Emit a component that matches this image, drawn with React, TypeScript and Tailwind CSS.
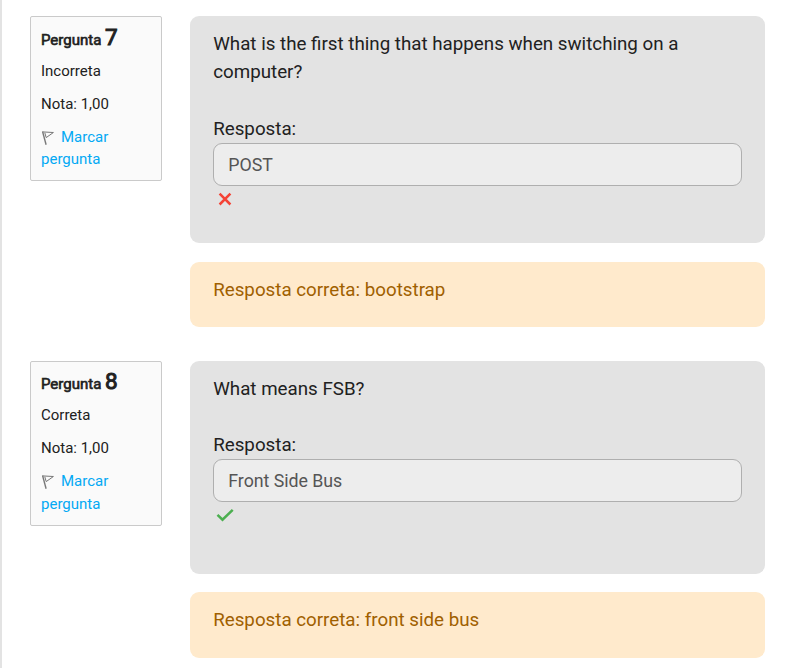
import React from "react";

function Flag() {
  return (
    <svg className="mr-[4px] inline-block" width="16" height="16" viewBox="0 0 16 16" fill="none" stroke="#777777" strokeWidth="1">
      <path d="M1.6 1.6 L5.1 14.7" strokeWidth="1.4" />
      <path d="M1.3 1.9 L12.4 2.5 L5.2 7.6 L3.8 2.8" />
    </svg>
  );
}

function Info({ n, state, ok }: { n: number; state: string; ok?: boolean }) {
  return (
    <aside className="h-[165px] w-[132px] shrink-0 rounded-[2px] border border-[#cacaca] bg-[#fafafa] px-[10px] text-[15px] leading-[22.5px] text-[#212121]">
      <h3 className={`h-[32px] text-[15px] font-normal leading-[32px] [-webkit-text-stroke:0.65px_#212121] ${ok ? "mt-[3px]" : "mt-[4px]"}`}>
        Pergunta <span className="text-[22.5px] [-webkit-text-stroke:1px_#212121]">{n}</span>
      </h3>
      <div className="mt-[7px]">{state}</div>
      <div className="mt-[10px]">Nota: 1,00</div>
      <div className={`text-[#03a9f4] ${ok ? "mt-[11px] leading-[23px]" : "mt-[10.5px]"}`}>
        <Flag />
        Marcar pergunta
      </div>
    </aside>
  );
}

function Question({ n, state, text, value, answer, ok }: { n: number; state: string; text: string; value: string; answer: string; ok?: boolean }) {
  return (
    <section className="flex items-start gap-[28px]">
      <Info n={n} state={state} ok={ok} />
      <div className="w-[575px]">
        <div className={`rounded-[9px] bg-[#e3e3e3] px-[23px] pt-[14px] text-[18.75px] leading-[28.125px] text-[#212121] ${ok ? "h-[213px]" : "h-[227px]"}`}>
          <p className={`pl-[0.2px] ${ok ? "mb-[28px]" : "mb-[28.5px]"}`}>{text}</p>
          <label className="block pl-[0.2px]">Resposta:</label>
          <div className={`flex h-[43px] items-center rounded-[9px] border border-[#afafaf] bg-[#ededed] px-[14.3px] text-[17.8px] tracking-[-0.05px] text-[#555555] ${ok ? "mt-0" : "mt-[0.2px]"}`}>{value}</div>
          <svg className="ml-[3px] mt-[4px]" width="18" height="18" viewBox="0 0 18 18" fill="none" stroke={ok ? "#4caf50" : "#f44336"} strokeWidth="2.5">
            {ok ? <path d="M1.5 8.8 L6.5 13.7 L16.7 3.8" /> : <path d="M3.6 3.7 L14.4 14.5 M14.4 3.7 L3.6 14.5" />}
          </svg>
        </div>
        <div className={`rounded-[9px] bg-[#ffeacc] pl-[23.2px] pr-[23px] pt-[14px] text-[18.75px] leading-[28.125px] text-[#a06000] ${ok ? "mt-[18px] h-[66px]" : "mt-[19px] h-[65px]"}`}>
          Resposta correta: {answer}
        </div>
      </div>
    </section>
  );
}

export default function App() {
  return (
    <main className="flex h-[668px] w-[792px] flex-col gap-[34px] overflow-hidden border-l-2 border-[#e3e3e3] bg-white pl-[28px] pt-[16px] font-['Roboto',sans-serif]">
      <Question n={7} state="Incorreta" text="What is the first thing that happens when switching on a computer?" value="POST" answer="bootstrap" />
      <Question n={8} state="Correta" text="What means FSB?" value="Front Side Bus" answer="front side bus" ok />
    </main>
  );
}
